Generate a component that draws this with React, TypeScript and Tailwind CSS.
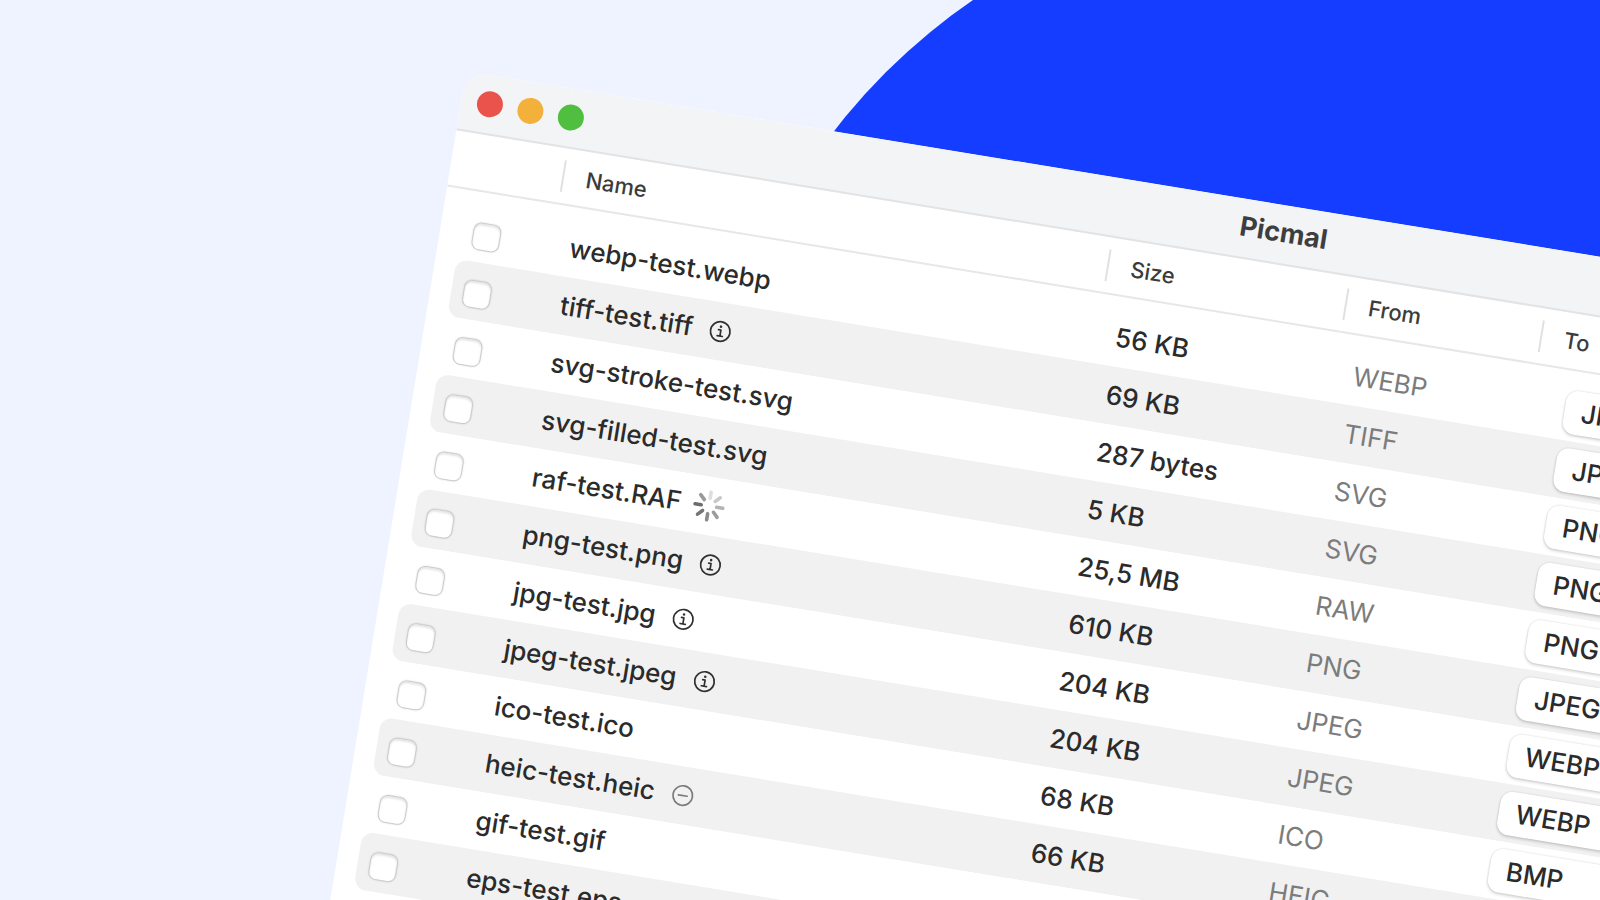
import React from "react";

type Status = "info" | "busy" | "skipped" | null;

interface FileRow {
  name: string;
  size: string;
  from: string;
  to: string;
  status: Status;
}

const files: FileRow[] = [
  { name: "webp-test.webp", size: "56 KB", from: "WEBP", to: "JPEG", status: null },
  { name: "tiff-test.tiff", size: "69 KB", from: "TIFF", to: "JPEG", status: "info" },
  { name: "svg-stroke-test.svg", size: "287 bytes", from: "SVG", to: "PNG", status: null },
  { name: "svg-filled-test.svg", size: "5 KB", from: "SVG", to: "PNG", status: null },
  { name: "raf-test.RAF", size: "25,5 MB", from: "RAW", to: "PNG", status: "busy" },
  { name: "png-test.png", size: "610 KB", from: "PNG", to: "JPEG", status: "info" },
  { name: "jpg-test.jpg", size: "204 KB", from: "JPEG", to: "WEBP", status: "info" },
  { name: "jpeg-test.jpeg", size: "204 KB", from: "JPEG", to: "WEBP", status: "info" },
  { name: "ico-test.ico", size: "68 KB", from: "ICO", to: "BMP", status: null },
  { name: "heic-test.heic", size: "66 KB", from: "HEIC", to: "PNG", status: "skipped" },
  { name: "gif-test.gif", size: "66 KB", from: "GIF", to: "PNG", status: null },
  { name: "eps-test.eps", size: "66 KB", from: "EPS", to: "PNG", status: null },
];

const formats = ["JPEG", "PNG", "WEBP", "BMP"];

function InfoIcon() {
  return (
    <svg className="size-6 text-[#303030]" viewBox="0 0 24 24" fill="none" stroke="currentColor" strokeWidth="1.7" aria-hidden="true">
      <circle cx="12" cy="12" r="9.8" />
      <path d="M10 10.4h2.4v6M9.6 16.6h5.2" strokeLinecap="round" strokeLinejoin="round" />
      <circle cx="12" cy="7.1" r="1.3" fill="currentColor" stroke="none" />
    </svg>
  );
}

function SkippedIcon() {
  return (
    <svg className="size-6 text-[#7b7b7b]" viewBox="0 0 24 24" fill="none" stroke="currentColor" strokeWidth="1.7" aria-hidden="true">
      <circle cx="12" cy="12" r="9.8" />
      <path d="M7.6 12h8.8" strokeLinecap="round" />
    </svg>
  );
}

const spokes = ["#dedede", "#c9c9c9", "#b3b3b3", "#9d9d9d", "#8a8a8a", "#757575", "#6c6c6c", "#999999"];

function Spinner() {
  return (
    <svg className="-ml-1.5 size-9" viewBox="-18 -18 36 36" aria-hidden="true">
      {spokes.map((color, i) => (
        <line key={i} x1="0" y1="-7.8" x2="0" y2="-14" stroke={color} strokeWidth="3.6" strokeLinecap="round" transform={`rotate(${i * 45})`} />
      ))}
    </svg>
  );
}

function HeaderCell({ children }: { children: React.ReactNode }) {
  return (
    <th scope="col" className="border-b-2 border-[#e6e7e8] p-0 text-left text-[22px] leading-8 font-medium text-[#3c3c3c]">
      <div className="border-l-2 border-[#e0e1e3] pl-[22px]">{children}</div>
    </th>
  );
}

function Row({ file, striped }: { file: FileRow; striped: boolean }) {
  const bg = striped ? "bg-[#f1f1f1]" : "bg-white";
  return (
    <tr className="h-[58px]">
      <td className="p-0 pl-[21px]">
        <div className={`-mr-px flex h-[58px] items-center rounded-l-xl pt-1.5 pl-3 ${bg}`}>
          <input
            type="checkbox"
            aria-label={`Select ${file.name}`}
            className="size-7 appearance-none rounded-lg border border-[#cccccc] bg-white shadow-[inset_0_2px_2px_#0000001a,0_0_2px_#00000024]"
          />
        </div>
      </td>
      <td className="p-0">
        <div className={`-mr-px flex h-[58px] items-center gap-4 pl-[19px] ${bg}`}>
          <span>{file.name}</span>
          {file.status === "info" && <InfoIcon />}
          {file.status === "busy" && <Spinner />}
          {file.status === "skipped" && <SkippedIcon />}
        </div>
      </td>
      <td className="p-0">
        <div className={`-mr-px flex h-[58px] items-center pl-5 ${bg}`}>{file.size}</div>
      </td>
      <td className="p-0">
        <div className={`-mr-px flex h-[58px] items-center pl-5 font-normal text-[#7c7c7c] ${bg}`}>{file.from}</div>
      </td>
      <td className="p-0 pr-5">
        <div className={`flex h-[58px] items-center rounded-r-xl pl-9 ${bg}`}>
          <select
            aria-label={`Convert ${file.name} to`}
            defaultValue={file.to}
            className="h-11 w-44 appearance-none rounded-xl bg-white pl-[17px] shadow-[0_0_2px_#0000002e,0_2px_3px_#00000024]"
          >
            {formats.map((format) => (
              <option key={format}>{format}</option>
            ))}
          </select>
        </div>
      </td>
    </tr>
  );
}

export default function App() {
  return (
    <main className="relative h-screen overflow-hidden bg-[#eef3ff] font-['Inter','Liberation_Sans',sans-serif] text-[#2b2b2b]">
      <div className="absolute top-[-107px] left-[706px] size-[1226px] rounded-full bg-[#143dff]" />
      <section
        aria-label="Picmal"
        className="absolute top-[71px] left-[466px] w-[1666px] origin-top-left rotate-[9.3deg] overflow-hidden rounded-[26px] bg-white pb-24"
      >
        <header className="grid h-[60px] grid-cols-[1fr_auto_1fr] items-center border-b-2 border-[#e2e3e5] bg-[#f2f4f6] px-4">
          <div className="flex gap-[15px]">
            <button type="button" aria-label="Close" className="size-[26px] rounded-full bg-[#ea534c]" />
            <button type="button" aria-label="Minimize" className="size-[26px] rounded-full bg-[#f3b13c]" />
            <button type="button" aria-label="Zoom" className="size-[26px] rounded-full bg-[#50be3f]" />
          </div>
          <h1 className="pb-0.5 text-[27px] leading-8 font-bold text-[#3e3e3e]">Picmal</h1>
        </header>
        <table className="w-full table-fixed border-separate border-spacing-0 text-[26px] leading-8 font-medium">
          <colgroup>
            <col className="w-[112px]" />
            <col className="w-[552px]" />
            <col className="w-[241px]" />
            <col className="w-[198px]" />
            <col />
          </colgroup>
          <thead>
            <tr className="h-[57px]">
              <th className="border-b-2 border-[#e6e7e8] p-0" aria-label="Selected" />
              <HeaderCell>Name</HeaderCell>
              <HeaderCell>Size</HeaderCell>
              <HeaderCell>From</HeaderCell>
              <HeaderCell>To</HeaderCell>
            </tr>
          </thead>
          <tbody>
            <tr aria-hidden="true" className="h-3">
              <td colSpan={5} className="p-0" />
            </tr>
            {files.map((file, i) => (
              <Row key={file.name} file={file} striped={i % 2 === 1} />
            ))}
          </tbody>
        </table>
      </section>
    </main>
  );
}
